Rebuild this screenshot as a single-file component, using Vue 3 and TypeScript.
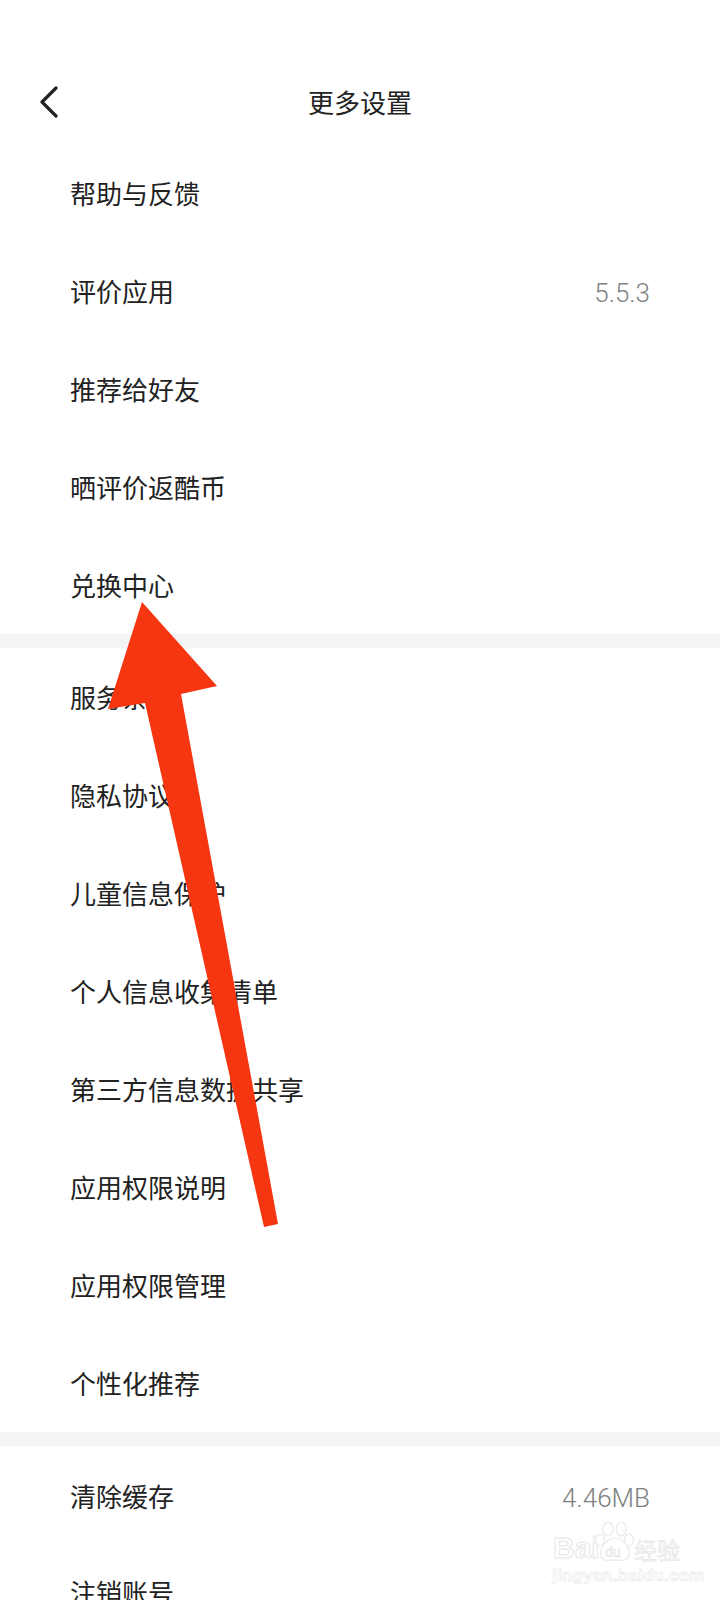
<script setup lang="ts">
interface Row {
  label: string;
  value?: string;
}

const groups: Row[][] = [
  [
    { label: "帮助与反馈" },
    { label: "评价应用", value: "5.5.3" },
    { label: "推荐给好友" },
    { label: "晒评价返酷币" },
    { label: "兑换中心" },
  ],
  [
    { label: "服务条款" },
    { label: "隐私协议" },
    { label: "儿童信息保护" },
    { label: "个人信息收集清单" },
    { label: "第三方信息数据共享" },
    { label: "应用权限说明" },
    { label: "应用权限管理" },
    { label: "个性化推荐" },
  ],
  [{ label: "清除缓存", value: "4.46MB" }, { label: "注销账号" }],
];
</script>

<template>
  <div class="page">
    <header class="header">
      <svg class="back" width="20" height="32" viewBox="0 0 20 32" fill="none">
        <path d="M17 2 L3 16 L17 30" stroke="#222" stroke-width="3.2" stroke-linecap="round" stroke-linejoin="round" />
      </svg>
      <h1 class="title">更多设置</h1>
    </header>

    <section v-for="(group, i) in groups" :key="i" class="group">
      <div v-for="row in group" :key="row.label" class="row">
        <span class="label">{{ row.label }}</span>
        <span v-if="row.value" class="value">{{ row.value }}</span>
      </div>
    </section>

    <!-- annotation arrow painted over the screenshot -->
    <svg class="arrow" width="720" height="1600" viewBox="0 0 720 1600">
      <polygon points="142,602 217,686 181,694 278,1224 264,1227 145,703 108,709" fill="#f63610" />
    </svg>

    <div class="watermark">
      <div class="wm-top">
        <span class="wm-bai">Bai</span>
        <svg class="wm-paw" width="40" height="44" viewBox="0 0 40 44" fill="#fff" stroke="#e8e8e8" stroke-width="1.2">
          <ellipse cx="13" cy="8" rx="5" ry="7" />
          <ellipse cx="26" cy="8" rx="5" ry="7" />
          <ellipse cx="5" cy="19" rx="4.5" ry="6" />
          <ellipse cx="34" cy="19" rx="4.5" ry="6" />
          <path d="M20 17 C28 17 36 27 34 35 C32 41 25 39 20 39 C15 39 8 41 6 35 C4 27 12 17 20 17 Z" />
        </svg>
        <span class="wm-du">du</span>
        <span class="wm-cn">经验</span>
      </div>
      <div class="wm-url">jingyan.baidu.com</div>
    </div>
  </div>
</template>

<style scoped>
.page {
  position: relative;
  width: 720px;
  height: 1600px;
  overflow: hidden;
  background: #fff;
  color: #222;
  font-family: "Noto Sans CJK SC", "Noto Sans", sans-serif;
}
.header {
  height: 145px;
  box-sizing: border-box;
  padding-top: 60px;
  display: flex;
  justify-content: center;
}
.title {
  margin: 0;
  font-size: 26px;
  font-weight: 400;
  line-height: 83px;
  height: 83px;
}
.back {
  position: absolute;
  left: 39px;
  top: 86px;
}
.group + .group {
  border-top: 14px solid #f4f4f4;
}
.group:nth-of-type(2) {
  margin-top: -1px;
}
.row {
  height: 98px;
  box-sizing: border-box;
  padding: 0 70px 4px 70px;
  display: flex;
  align-items: center;
  justify-content: space-between;
  font-size: 26px;
}
.group:nth-of-type(2) .row {
  padding-bottom: 2px;
}
.group:nth-of-type(3) .row:first-child {
  padding-bottom: 0;
}
.value {
  margin-top: 6px;
  color: #808080;
  font-size: 26px;
  font-weight: 300;
  font-family: Roboto, sans-serif;
}
.arrow {
  position: absolute;
  left: 0;
  top: 0;
}
.watermark {
  position: absolute;
  left: 552px;
  top: 1521px;
  width: 128px;
  color: #fff;
  -webkit-text-stroke: 1px #e6e6e6;
  font-family: "Liberation Sans", sans-serif;
}
.wm-top {
  position: relative;
  height: 44px;
}
.wm-bai {
  position: absolute;
  left: 1px;
  top: 10px;
  font-size: 30px;
  line-height: 34px;
  font-weight: 700;
}
.wm-paw {
  position: absolute;
  left: 43px;
  top: 0;
}
.wm-du {
  position: absolute;
  left: 53px;
  top: 23px;
  font-size: 14px;
  line-height: 16px;
  -webkit-text-stroke: 0.6px #e0e0e0;
}
.wm-cn {
  position: absolute;
  left: 82px;
  top: 15px;
  font-size: 23px;
  line-height: 26px;
  font-family: "Noto Sans CJK SC", sans-serif;
  -webkit-text-stroke: 0.8px #e6e6e6;
}
.wm-url {
  margin-top: 1px;
  font-size: 17px;
  line-height: 20px;
  letter-spacing: 0.2px;
  font-weight: 700;
  -webkit-text-stroke: 0.6px #e6e6e6;
}
</style>
